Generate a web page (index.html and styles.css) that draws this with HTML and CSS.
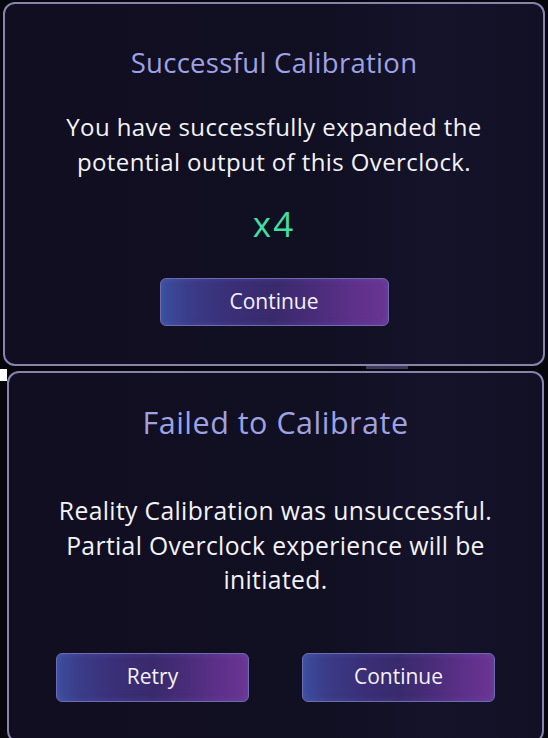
FILE: index.html
```html
<!DOCTYPE html>
<html lang="en">
<head>
<meta charset="utf-8">
<title>Calibration</title>
<link rel="stylesheet" href="styles.css">
</head>
<body>
<div class="stage">
  <section class="panel panel-top">
    <h2 class="title">Successful Calibration</h2>
    <p class="body">You have successfully expanded the<br>potential output of this Overclock.</p>
    <div class="mult">x4</div>
    <button class="btn btn-wide">Continue</button>
  </section>
  <div class="divider"><span class="handle"></span></div>
  <section class="panel panel-bottom">
    <span class="edge-mark"></span>
    <h2 class="title title-lg">Failed to Calibrate</h2>
    <p class="body body-b">Reality Calibration was unsuccessful.<br>Partial Overclock experience will be<br>initiated.</p>
    <div class="actions">
      <button class="btn">Retry</button>
      <button class="btn">Continue</button>
    </div>
  </section>
</div>
</body>
</html>
```

FILE: styles.css
```css
html, body {
  margin: 0;
  padding: 0;
  background: #07060d;
  width: 548px;
  height: 738px;
  overflow: hidden;
  font-family: "Open Sans", "DejaVu Sans", sans-serif;
}

.stage {
  display: flex;
  flex-direction: column;
  padding-top: 2px;
}

.panel {
  box-sizing: border-box;
  border: 2px solid #8683ad;
  border-radius: 12px;
  background: linear-gradient(90deg, #100e20 0%, #110f22 60%, #15132a 80%, #121024 100%);
  display: flex;
  flex-direction: column;
  align-items: center;
  text-align: center;
  color: #f2f2f6;
}

.panel-top {
  margin: 0 3px 0 3px;
  height: 364px;
  padding-top: 42px;
}

.divider {
  height: 5px;
  position: relative;
}

.handle {
  position: absolute;
  left: 366px;
  top: 0;
  width: 42px;
  height: 3px;
  background: #3a3758;
}

.panel-bottom {
  margin: 0 4px 0 7px;
  height: 372px;
  padding-top: 31px;
  position: relative;
}

.edge-mark {
  position: absolute;
  left: -9px;
  top: -4px;
  width: 7px;
  height: 12px;
  background: #ffffff;
}

.title {
  margin: 0;
  font-weight: 400;
  font-size: 27.5px;
  line-height: 34px;
  color: #9ea2e4;
  letter-spacing: 0.3px;
}

.title-lg {
  font-size: 30.5px;
  line-height: 36px;
  letter-spacing: 0.5px;
}

.body {
  margin: 29px 0 0 0;
  font-size: 24px;
  line-height: 35px;
  letter-spacing: 0.4px;
  color: #f3f3f7;
}

.body-b {
  margin-top: 54px;
  font-size: 24.7px;
  line-height: 34.5px;
  letter-spacing: 0.35px;
}

.mult {
  margin-top: 27px;
  font-size: 35px;
  line-height: 36px;
  letter-spacing: 2px;
  color: #45dca2;
}

.btn {
  box-sizing: border-box;
  width: 193px;
  height: 49px;
  border: 1.5px solid #6c6ab0;
  border-radius: 6px;
  background: linear-gradient(90deg, #3b4e9e 0%, #3b3c88 12%, #3a2f78 30%, #392a6c 50%, #4a2c7a 68%, #5e308a 85%, #6a3592 100%);
  color: #f4f2fa;
  font-family: inherit;
  font-size: 21px;
  padding: 0 0 2px 0;
  box-shadow: inset 0 0 6px rgba(120, 120, 220, 0.25);
}

.btn-wide {
  width: 229px;
  height: 48px;
  margin-top: 36px;
}

.actions {
  margin-top: 55px;
  display: flex;
  gap: 53px;
}
```
